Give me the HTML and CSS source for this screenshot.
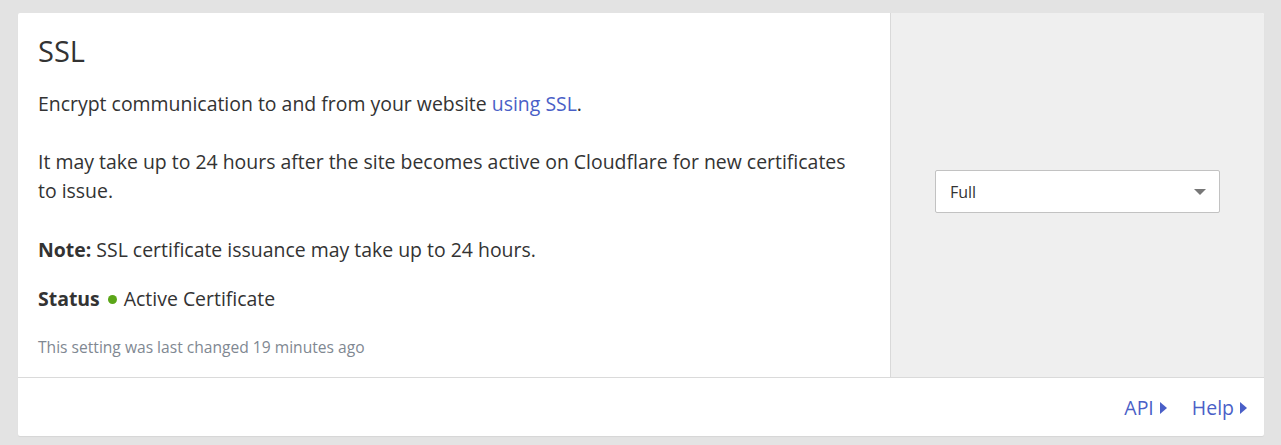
FILE: index.html
```html
<!DOCTYPE html>
<html lang="en">
<head>
<meta charset="utf-8">
<title>SSL</title>
<link rel="stylesheet" href="styles.css">
</head>
<body>
<div class="card">
  <div class="card-main">
    <div class="content">
      <h3 class="title">SSL</h3>
      <p class="para first">Encrypt communication to and from your website <a href="#" class="link">using SSL</a>.</p>
      <p class="para second">It may take up to 24 hours after the site becomes active on Cloudflare for new certificates to issue.</p>
      <p class="para third"><strong>Note:</strong> SSL certificate issuance may take up to 24 hours.</p>
      <p class="status"><strong>Status</strong><span class="dot"></span>Active Certificate</p>
      <p class="meta">This setting was last changed 19 minutes ago</p>
    </div>
    <div class="control">
      <div class="select">
        <span class="select-value">Full</span>
        <span class="caret"></span>
      </div>
    </div>
  </div>
  <div class="card-footer">
    <a href="#" class="foot-link">API<span class="tri"></span></a>
    <a href="#" class="foot-link">Help<span class="tri"></span></a>
  </div>
</div>
</body>
</html>
```

FILE: styles.css
```css
html, body {
  margin: 0;
  padding: 0;
}
body {
  background: #e3e3e3;
  font-family: "Open Sans", "Noto Sans", sans-serif;
  color: #333333;
  padding: 13px 17px 9px 18px;
}
.card {
  width: 1246px;
  background: #ffffff;
  border-radius: 2px;
  box-shadow: 0 1px 1px rgba(0,0,0,0.06);
}
.card-main {
  display: flex;
  border-bottom: 1px solid #dadada;
}
.content {
  width: 852px;
  padding: 20px 0 19px 20px;
  border-right: 1px solid #d9d9d9;
}
.title {
  margin: 0;
  font-size: 29px;
  font-weight: 400;
  line-height: 36px;
  color: #333333;
}
.para {
  margin: 0;
  font-size: 19.45px;
  line-height: 29px;
  padding-right: 42px;
}
.para.first {
  margin-top: 20px;
}
.para.second {
  margin-top: 29px;
}
.para.third {
  margin-top: 30px;
}
.para strong, .status strong {
  font-weight: 700;
}
.link {
  color: #4a5fc7;
  text-decoration: none;
}
.status {
  margin: 20px 0 0;
  font-size: 19.45px;
  line-height: 29px;
  display: flex;
  align-items: center;
}
.dot {
  display: inline-block;
  width: 9px;
  height: 9px;
  border-radius: 50%;
  background: #5ba618;
  margin: 1px 7px 0 8px;
}
.meta {
  margin: 23px 0 0;
  font-size: 15.6px;
  line-height: 22px;
  color: #7f8892;
}
.control {
  flex: 1;
  background: #efefef;
  display: flex;
  align-items: center;
  justify-content: center;
  border-radius: 0 2px 0 0;
}
.select {
  box-sizing: border-box;
  width: 285px;
  height: 43px;
  background: #ffffff;
  border: 1px solid #c2c2c2;
  border-radius: 2px;
  display: flex;
  align-items: center;
  justify-content: space-between;
  padding: 0 13px 0 14px;
  margin-top: -7px;
}
.select-value {
  font-size: 16px;
  color: #333333;
}
.caret {
  width: 0;
  height: 0;
  border-left: 6px solid transparent;
  border-right: 6px solid transparent;
  border-top: 6px solid #777777;
}
.card-footer {
  height: 58px;
  display: flex;
  justify-content: flex-end;
  align-items: center;
  gap: 25px;
  padding-right: 17px;
}
.foot-link {
  font-size: 19.5px;
  color: #4a5fc7;
  text-decoration: none;
  display: flex;
  align-items: center;
}
.tri {
  display: inline-block;
  width: 0;
  height: 0;
  border-top: 6px solid transparent;
  border-bottom: 6px solid transparent;
  border-left: 7px solid #4a5fc7;
  margin-left: 6px;
  margin-top: 1px;
}
```
